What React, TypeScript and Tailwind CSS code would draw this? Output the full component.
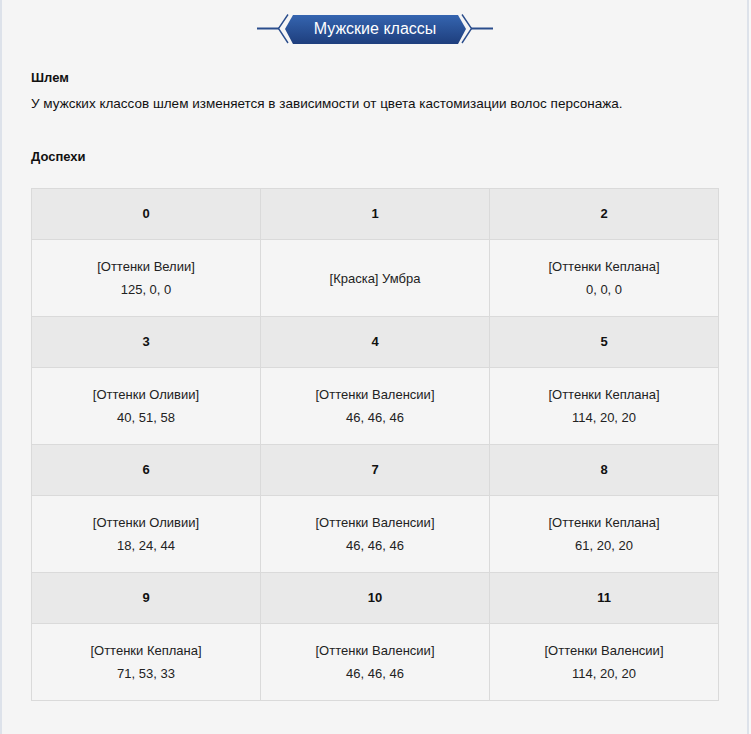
import React from "react";

const rows = [
  [
    { t: "[Оттенки Велии]", v: "125, 0, 0" },
    { t: "[Краска] Умбра", v: "" },
    { t: "[Оттенки Кеплана]", v: "0, 0, 0" },
  ],
  [
    { t: "[Оттенки Оливии]", v: "40, 51, 58" },
    { t: "[Оттенки Валенсии]", v: "46, 46, 46" },
    { t: "[Оттенки Кеплана]", v: "114, 20, 20" },
  ],
  [
    { t: "[Оттенки Оливии]", v: "18, 24, 44" },
    { t: "[Оттенки Валенсии]", v: "46, 46, 46" },
    { t: "[Оттенки Кеплана]", v: "61, 20, 20" },
  ],
  [
    { t: "[Оттенки Кеплана]", v: "71, 53, 33" },
    { t: "[Оттенки Валенсии]", v: "46, 46, 46" },
    { t: "[Оттенки Валенсии]", v: "114, 20, 20" },
  ],
];

const Banner = () => (
  <div className="relative mx-auto flex h-[32px] w-[236px] items-center justify-center">
    <svg className="absolute inset-0" width="236" height="32" viewBox="0 0 236 32">
      <defs>
        <linearGradient id="bn" x1="0" y1="0" x2="0" y2="1">
          <stop offset="0" stopColor="#3565b0" />
          <stop offset="1" stopColor="#1e3e7d" />
        </linearGradient>
      </defs>
      <line x1="0" y1="15.5" x2="22" y2="15.5" stroke="#2a4d8c" strokeWidth="2" />
      <line x1="214" y1="15.5" x2="236" y2="15.5" stroke="#2a4d8c" strokeWidth="2" />
      <polyline points="31,1.5 21.5,15.5 31,30" fill="none" stroke="#2a4d8c" strokeWidth="1.4" />
      <polyline points="205,1.5 214.5,15.5 205,30" fill="none" stroke="#2a4d8c" strokeWidth="1.4" />
      <polygon points="36,2 201,2 209,16 201,31 36,31 28,16" fill="url(#bn)" />
    </svg>
    <span className="relative text-[16px] leading-none text-white">Мужские классы</span>
  </div>
);

export default function App() {
  return (
    <div className="min-h-screen bg-[#f8f8f8]">
      <div
        className="min-h-screen w-[749px] border-x-2 border-[#dde2ea] bg-[#f5f5f5] pl-[29px] pt-[13px] pb-[30px] text-[#111]"
        style={{ fontFamily: '"Liberation Sans", Arial, sans-serif' }}
      >
        <div className="w-[688px]">
          <Banner />
        </div>
        <div className="mt-[23px] text-[13px] font-bold leading-[20px]">Шлем</div>
        <p className="mt-[6px] text-[13.5px] leading-[20px]">
          У мужских классов шлем изменяется в зависимости от цвета кастомизации волос персонажа.
        </p>
        <div className="mt-[33px] text-[13px] font-bold leading-[20px]">Доспехи</div>
        <div className="mt-[21px] grid w-[688px] grid-cols-3 gap-px bg-[#dadada] p-px text-[13px]">
          {rows.map((row, i) => (
            <React.Fragment key={i}>
              {row.map((_, j) => (
                <div
                  key={"h" + j}
                  className="flex h-[50px] items-center justify-center bg-[#e9e9e9] font-bold"
                >
                  {i * 3 + j}
                </div>
              ))}
              {row.map((c, j) => (
                <div
                  key={"d" + j}
                  className="flex h-[76px] flex-col items-center justify-center bg-[#f5f5f5] leading-[23px] text-[#222]"
                >
                  <span>{c.t}</span>
                  {c.v && <span>{c.v}</span>}
                </div>
              ))}
            </React.Fragment>
          ))}
        </div>
      </div>
    </div>
  );
}
